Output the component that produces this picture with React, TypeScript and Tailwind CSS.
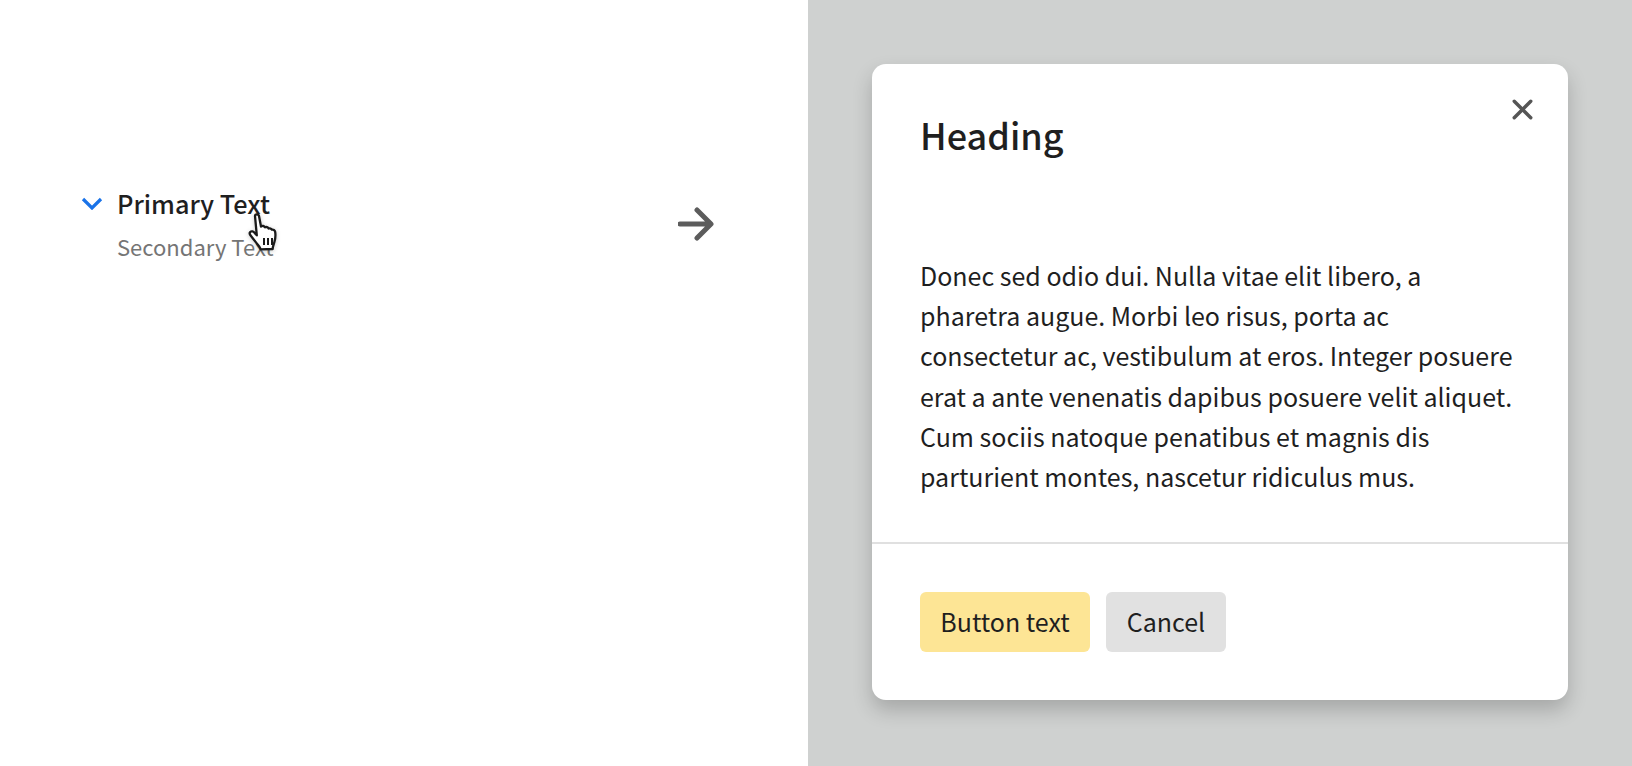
import React from 'react';
import { X } from 'lucide-react';

const HandCursor = () => (
    <svg width="32" height="40" viewBox="0 0 32 40" className="absolute left-[248px] top-[213px] drop-shadow-[0_1px_2px_rgba(0,0,0,0.2)]">
        <path
            d="M7 3c0-2.200 3.600-2.200 4 0l2 10.500c1.500-1 3.200-.6 4 .8 1.200-.7 3-.2 3.600 1.200 1.200-.5 2.800 0 3.300 1.200 1.400-.3 3 .4 3.300 2.300.5 3.300.1 7-.8 10l-1.300 4.300c-.2.800-.4 2-.4 2.700l-12 .4c-.6-2-1.700-3.400-3.200-5L3 23c-1.200-1.400-2-2.800-.8-4 1.300-1.200 3.300-.5 4.400.9l2.200 2.400z"
            fill="#fff"
            stroke="#1a1a1a"
            strokeWidth="2.300"
            strokeLinejoin="round"
        />
        <path d="M16 25v7M20 25v7M24 25v7" stroke="#1a1a1a" strokeWidth="2" />
    </svg>
);

export default function App() {
    return (
        <div className="relative flex h-[766px] w-full overflow-hidden bg-white text-[#1f1f1f] font-['Noto_Sans_CJK_SC','Noto_Sans',sans-serif]">
            <div className="flex w-[808px] items-start justify-between pl-[81px] pr-[94px]">
                <div className="mt-[183px] flex items-start gap-[14px]">
                    <svg width="22" height="14" viewBox="0 0 22 14" className="mt-[13px]">
                        <path d="M2 3l9 9 9-9" fill="none" stroke="#1a73e8" strokeWidth="3.200" />
                    </svg>
                    <div>
                        <p className="text-[25.300px] font-medium leading-[40px]">Primary Text</p>
                        <p className="mt-[3px] text-[22px] leading-[40px] text-[#757575]">Secondary Text</p>
                    </div>
                </div>
                <svg width="36" height="36" viewBox="0 0 36 36" className="mt-[206px]">
                    <path d="M2 18h30M19 4 33 18 19 32" fill="none" stroke="#5c5c5c" strokeWidth="5" strokeLinecap="round" strokeLinejoin="round" />
                </svg>
            </div>

            <div className="flex-1 bg-[#cfd1d0] pl-[64px] pt-[64px]">
                <div className="relative w-[696px] h-[636px] rounded-[14px] bg-white shadow-[0_10px_20px_rgba(0,0,0,0.2)]">
                    <button className="absolute right-[29px] top-[29px] text-[#555]">
                        <X size={33} strokeWidth={2.500} />
                    </button>
                    <h2 className="px-[48px] pt-[42px] text-[36px] font-medium leading-[56px]">Heading</h2>
                    <p className="mt-[93px] px-[48px] text-[25px] leading-[40.200px]">
                        Donec sed odio dui. Nulla vitae elit libero, a pharetra augue. Morbi leo risus, porta ac consectetur ac, vestibulum at eros. Integer posuere erat a ante venenatis dapibus posuere velit aliquet. Cum sociis natoque penatibus et magnis dis parturient montes, nascetur ridiculus mus.
                    </p>
                    <div className="mt-[46px] flex gap-4 border-t-2 border-[#e0e0e0] px-[48px] pt-[48px]">
                        <button className="h-[60px] w-[170px] rounded-[6px] bg-[#fde595] text-[25px]">Button text</button>
                        <button className="h-[60px] w-[120px] rounded-[6px] bg-[#e1e1e1] text-[25px]">Cancel</button>
                    </div>
                </div>
            </div>
            <HandCursor />
        </div>
    );
}
